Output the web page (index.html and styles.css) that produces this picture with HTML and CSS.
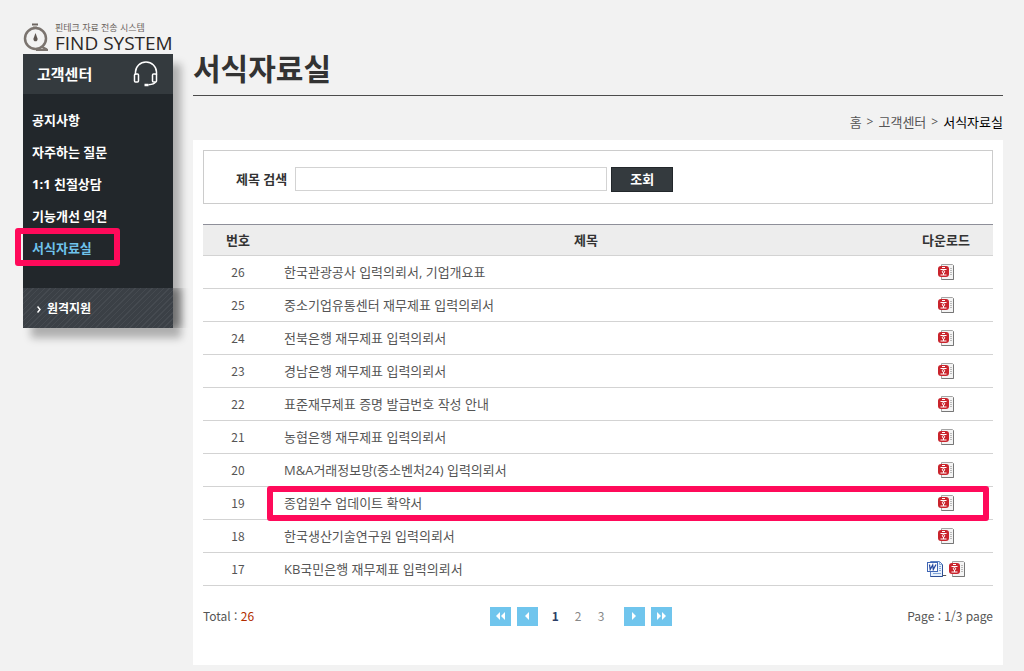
FILE: index.html
```html
<!DOCTYPE html>
<html lang="ko">
<head>
  <meta charset="UTF-8">
  <meta name="viewport" content="width=device-width, initial-scale=1.0">
  <title>서식자료실</title>
  <link rel="stylesheet" href="styles.css">
</head>
<body>
  <!-- 아이콘 -->
  <svg class="sprite" width="0" height="0">
    <symbol id="icon-hwp" viewBox="0 0 16 16">
      <path d="M3.5 .5h11l1 1v14h-12z" fill="#f4f4f4" stroke="#a5a5a5"/>
      <path d="M15.5 1.500v14h-12" fill="none" stroke="#777"/>
      <path d="M12 4.500h2M12 6.500h2M12 8.500h2M12 10.500h2" stroke="#bbb"/>
      <rect x="0" y="2" width="11" height="11" rx="3" fill="#c9242c"/>
      <path d="M4 3.500h3M2.500 5.500h6M5.500 9v2M2.500 11h6" stroke="#fff"/>
      <circle cx="5.500" cy="7.800" r="1.200" fill="none" stroke="#fff"/>
    </symbol>
    <symbol id="icon-doc" viewBox="0 0 16 16">
      <path d="M3.500 .5h9l3 3v12h-12z" fill="#e8f1fc" stroke="#5b7fc0"/>
      <path d="M15.500 3.500v12h-12" fill="none" stroke="#2c4f96"/>
      <path d="M12.500 .5v3h3M12 5.500h2M12 7.500h2M12 9.500h2M6 12.500h8" fill="none" stroke="#83a6d8"/>
      <rect x=".5" y="1.500" width="10" height="9" fill="#fff" stroke="#3f66b5"/>
      <path d="M2.500 3.500l.7 5L5.700 4l.6 4.500L9 3.500" fill="none" stroke="#2549a0" stroke-width="1.300"/>
    </symbol>
  </svg>

  <div class="container">
    <div class="sidebar">
      <a class="logo" href="#">
        <svg width="26" height="29" viewBox="0 0 26 29">
          <path d="M9 2.500h6" stroke="#6d6661" stroke-width="2"/>
          <path d="M12 3.500v2" stroke="#bdb9b5" stroke-width="4"/>
          <circle cx="12.500" cy="16.500" r="10.500" fill="none" stroke="#7b746f" stroke-width="2.500"/>
          <path d="M12.500 11l2 5.500a2.100 2.100 0 1 1-4 0z" fill="#5f5752"/>
          <path d="M13 28h12M19 25l5 2.500" stroke="#7b746f" stroke-width="2"/>
        </svg>
        <span class="logo-text">
          <span class="logo-sub">핀테크 자료 전송 시스템</span>
          <span class="logo-name">FIND SYSTEM</span>
        </span>
      </a>
      <div class="side-menu">
        <h2 class="side-title">
          고객센터
          <svg width="26" height="26" viewBox="0 0 26 26" fill="none" stroke="#fff" stroke-width="1.500">
            <path d="M2.500 14v-3a10.500 10 0 0 1 21 0v3"/>
            <rect x="1.500" y="13" width="4" height="8" rx="1"/>
            <rect x="19.500" y="13" width="4" height="8" rx="1"/>
            <path d="M22.500 21c-1 2-3 2.500-7 2.800"/>
            <path d="M11.500 24h4" stroke-width="2.500"/>
          </svg>
        </h2>
        <ul class="side-list">
          <li><a href="#">공지사항</a></li>
          <li><a href="#">자주하는 질문</a></li>
          <li><a href="#">1:1 친절상담</a></li>
          <li><a href="#">기능개선 의견</a></li>
          <li class="active"><a href="#">서식자료실</a></li>
        </ul>
        <a class="remote" href="#">
          <svg width="4" height="7" viewBox="0 0 4 7"><path d="M.5 .5l2.500 3-2.500 3" fill="none" stroke="#fff" stroke-width="1.500"/></svg>
          원격지원
        </a>
      </div>
    </div>

    <div class="main">
      <h1>서식자료실</h1>
      <div class="breadcrumb">
        <a href="#">홈</a><span>&gt;</span><a href="#">고객센터</a><span>&gt;</span><a class="current" href="#">서식자료실</a>
      </div>

      <div class="content">
        <form class="search">
          <label for="keyword">제목 검색</label>
          <input type="text" id="keyword">
          <button type="button">조회</button>
        </form>

        <table class="board">
          <thead>
            <tr><th class="col-no">번호</th><th>제목</th><th class="col-file">다운로드</th></tr>
          </thead>
          <tbody>
            <tr><td class="no">26</td><td class="subject">한국관광공사 입력의뢰서, 기업개요표</td><td><a href="#" aria-label="HWP"><svg class="file"><use href="#icon-hwp"/></svg></a></td></tr>
            <tr><td class="no">25</td><td class="subject">중소기업유통센터 재무제표 입력의뢰서</td><td><a href="#" aria-label="HWP"><svg class="file"><use href="#icon-hwp"/></svg></a></td></tr>
            <tr><td class="no">24</td><td class="subject">전북은행 재무제표 입력의뢰서</td><td><a href="#" aria-label="HWP"><svg class="file"><use href="#icon-hwp"/></svg></a></td></tr>
            <tr><td class="no">23</td><td class="subject">경남은행 재무제표 입력의뢰서</td><td><a href="#" aria-label="HWP"><svg class="file"><use href="#icon-hwp"/></svg></a></td></tr>
            <tr><td class="no">22</td><td class="subject">표준재무제표 증명 발급번호 작성 안내</td><td><a href="#" aria-label="HWP"><svg class="file"><use href="#icon-hwp"/></svg></a></td></tr>
            <tr><td class="no">21</td><td class="subject">농협은행 재무제표 입력의뢰서</td><td><a href="#" aria-label="HWP"><svg class="file"><use href="#icon-hwp"/></svg></a></td></tr>
            <tr><td class="no">20</td><td class="subject">M&amp;A거래정보망(중소벤처24) 입력의뢰서</td><td><a href="#" aria-label="HWP"><svg class="file"><use href="#icon-hwp"/></svg></a></td></tr>
            <tr class="marked"><td class="no">19</td><td class="subject">종업원수 업데이트 확약서</td><td><a href="#" aria-label="HWP"><svg class="file"><use href="#icon-hwp"/></svg></a></td></tr>
            <tr><td class="no">18</td><td class="subject">한국생산기술연구원 입력의뢰서</td><td><a href="#" aria-label="HWP"><svg class="file"><use href="#icon-hwp"/></svg></a></td></tr>
            <tr><td class="no">17</td><td class="subject">KB국민은행 재무제표 입력의뢰서</td><td><a class="word" href="#" aria-label="DOC"><svg class="file"><use href="#icon-doc"/></svg> </a><a href="#" aria-label="HWP"><svg class="file"><use href="#icon-hwp"/></svg></a></td></tr>
          </tbody>
        </table>

        <div class="board-footer">
          <div>Total : <span class="total">26</span></div>
          <div class="pager">
            <button type="button" aria-label="처음"><svg width="9" height="8" viewBox="0 0 9 8"><path d="M4 0v8L0 4zM9 0v8L5 4z"/></svg></button>
            <button type="button" aria-label="이전"><svg width="4" height="8" viewBox="0 0 4 8"><path d="M4 0v8L0 4z"/></svg></button>
            <div class="pages"><a class="on" href="#">1</a><a href="#">2</a><a href="#">3</a></div>
            <button type="button" aria-label="다음"><svg width="4" height="8" viewBox="0 0 4 8"><path d="M0 0v8l4-4z"/></svg></button>
            <button type="button" aria-label="마지막"><svg width="9" height="8" viewBox="0 0 9 8"><path d="M0 0v8l4-4zM5 0v8l4-4z"/></svg></button>
          </div>
          <div>Page : 1/3 page</div>
        </div>
      </div>
    </div>
  </div>
</body>
</html>
```
FILE: styles.css
```css
*,
*::after {
  margin: 0;
  padding: 0;
  box-sizing: border-box;
}

body {
  font-family: "Open Sans", "Noto Sans CJK KR", sans-serif;
  font-size: 13px;
  line-height: 20px;
  color: #555;
  background-color: #f2f2f2;
}

a {
  color: inherit;
  text-decoration: none;
}

.sprite {
  position: absolute;
}

.container {
  display: flex;
  gap: 20px;
  padding: 22px 21px 6px 23px;
}

/* 왼쪽 메뉴 */
.sidebar {
  flex: 0 0 150px;
}

.logo {
  display: flex;
  gap: 6px;
  height: 32px;
  white-space: nowrap;
}

.logo svg {
  flex: none;
}

.logo-text {
  display: flex;
  flex-direction: column;
}

.logo-sub {
  font-size: 9px;
  line-height: 12px;
  color: #6b6460;
}

.logo-name {
  font-size: 19px;
  line-height: 18px;
  color: #2b2725;
}

.side-menu {
  color: #fff;
  font-weight: bold;
  background-color: #22272b;
  box-shadow: 8px 10px 8px rgba(0, 0, 0, 0.28);
}

.side-title {
  display: flex;
  align-items: center;
  justify-content: space-between;
  height: 40px;
  padding: 0 14px;
  font-size: 15px;
  background-color: #343a3e;
}

.side-list {
  padding: 10px 0 24px;
  list-style: none;
}

.side-list li {
  position: relative;
  padding: 6px 9px;
}

.side-list .active {
  color: #6fc3ec;
}

.side-list .active::after {
  content: "";
  position: absolute;
  top: -4px;
  left: -8px;
  width: 105px;
  height: 38px;
  border: 6px solid #ff0a5a;
  border-radius: 3px;
}

.remote {
  display: flex;
  align-items: center;
  gap: 6px;
  height: 40px;
  padding: 2px 14px 0;
  font-size: 12px;
  background: repeating-linear-gradient(135deg, #3b4046 0 3px, #454a50 3px 4px);
  box-shadow: 8px 0 8px rgba(0, 0, 0, 0.35);
  clip-path: inset(0 -20px 0 0);
}

/* 본문 */
.main {
  flex: 1;
  min-width: 0;
}

h1 {
  padding: 26px 0 5px;
  font-size: 30px;
  line-height: 42px;
  color: #333;
  border-bottom: 1px solid #4c4c4c;
}

.breadcrumb {
  display: flex;
  justify-content: flex-end;
  gap: 5px;
  padding: 16px 0 8px;
}

.breadcrumb span {
  font-size: 12px;
}

.breadcrumb .current {
  color: #000;
}

.content {
  padding: 10px 10px 39px;
  background-color: #fff;
}

.search {
  display: flex;
  align-items: center;
  height: 54px;
  margin-bottom: 20px;
  padding: 4px 32px 0;
  border: 1px solid #ccc;
}

.search label {
  margin-right: 8px;
  font-weight: bold;
  color: #333;
}

.search input {
  width: 312px;
  height: 24px;
  margin-right: 4px;
  padding: 0 5px;
  border: 1px solid #d3d3d3;
}

.search button {
  width: 62px;
  height: 25px;
  font: inherit;
  font-weight: bold;
  color: #fff;
  background-color: #343a3e;
  border: 1px solid #22272b;
}

.board {
  width: 100%;
  table-layout: fixed;
  border-collapse: separate;
  border-spacing: 0;
  text-align: center;
}

.board th {
  height: 32px;
  color: #333;
  background-color: #ededed;
  border-top: 1px solid #8e8f99;
  border-bottom: 1px solid #d3d3d3;
}

.board td {
  height: 33px;
  border-bottom: 1px solid #d3d3d3;
}

.board .col-no {
  width: 70px;
}

.board .col-file {
  width: 94px;
}

.board .no {
  font-family: "Noto Sans CJK KR", sans-serif;
  font-size: 12px;
}

.board .subject {
  padding-left: 11px;
  text-align: left;
}

.board .marked {
  position: relative;
}

.board .marked .subject::after {
  content: "";
  position: absolute;
  top: -1px;
  left: 64px;
  right: 4px;
  height: 35px;
  border: 6px solid #ff0a5a;
  border-radius: 3px;
  pointer-events: none;
}

.file {
  width: 16px;
  height: 16px;
  margin-bottom: 2px;
  vertical-align: middle;
}

.word {
  margin-right: 3px;
  text-decoration: underline;
}

.board-footer {
  display: flex;
  align-items: center;
  justify-content: space-between;
  padding-top: 20px;
  font-family: "Noto Sans CJK KR", sans-serif;
  font-size: 12px;
}

.total {
  color: #b22d00;
}

.pager {
  display: flex;
  align-items: center;
  gap: 6px;
}

.pager button {
  display: flex;
  align-items: center;
  justify-content: center;
  width: 21px;
  height: 19px;
  background-color: #70c5ed;
  border: 0;
}

.pager path {
  fill: #fff;
}

.pages {
  display: flex;
  padding-right: 5px;
  color: #888;
  text-align: center;
}

.pages a {
  width: 23px;
}

.pages .on {
  font-weight: bold;
  color: #2c3e66;
}
```
